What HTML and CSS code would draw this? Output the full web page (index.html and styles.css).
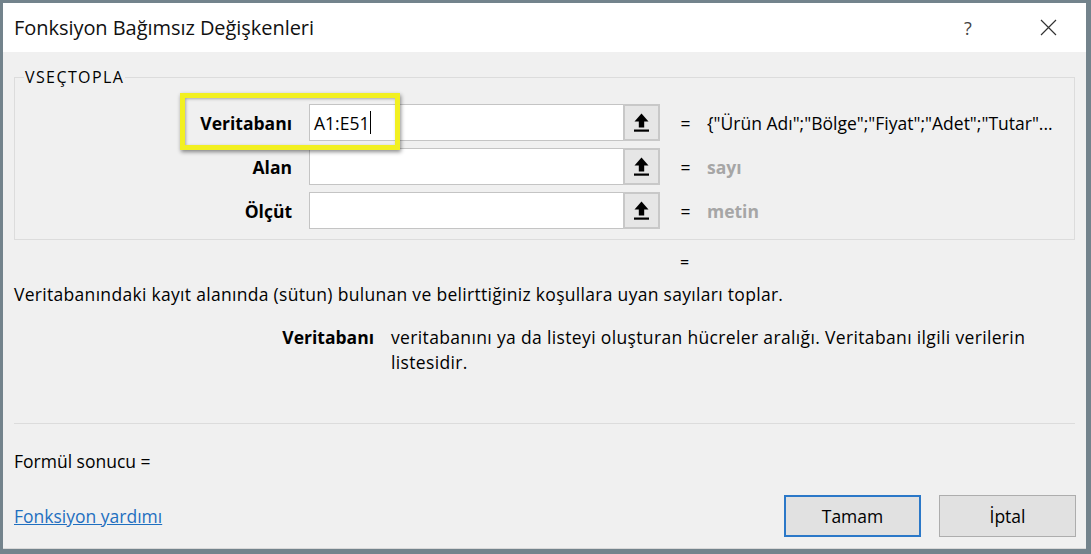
FILE: index.html
```html
<!DOCTYPE html>
<html lang="tr">
<head>
<meta charset="utf-8">
<title>Fonksiyon Bağımsız Değişkenleri</title>
<link rel="stylesheet" href="styles.css">
</head>
<body>
<div class="window">
  <div class="dialog">
    <div class="titlebar">
      <div class="title">Fonksiyon Bağımsız Değişkenleri</div>
      <div class="tb-help">?</div>
      <div class="tb-close">
        <svg width="17" height="17" viewBox="0 0 17 17"><path d="M1 1 L16 16 M16 1 L1 16" stroke="#333" stroke-width="1.2" fill="none"/></svg>
      </div>
    </div>
    <div class="body">
      <fieldset class="group">
        <legend class="legend">VSEÇTOPLA</legend>
        <div class="args">
          <div class="arg-label">Veritabanı</div>
          <div class="arg-input"><span class="typed">A1:E51</span><span class="caret"></span></div>
          <div class="arg-btn"><svg width="15" height="19" viewBox="0 0 15 19"><path d="M7.5 0.5 L14.5 8.5 L10.2 8.5 L10.2 14.5 L4.8 14.5 L4.8 8.5 L0.5 8.5 Z" fill="#000"/><rect x="0" y="16.5" width="15" height="2.2" fill="#000"/></svg></div>
          <div class="arg-eq">=</div>
          <div class="arg-val">{"Ürün Adı";"Bölge";"Fiyat";"Adet";"Tutar"...</div>

          <div class="arg-label">Alan</div>
          <div class="arg-input"></div>
          <div class="arg-btn"><svg width="15" height="19" viewBox="0 0 15 19"><path d="M7.5 0.5 L14.5 8.5 L10.2 8.5 L10.2 14.5 L4.8 14.5 L4.8 8.5 L0.5 8.5 Z" fill="#000"/><rect x="0" y="16.5" width="15" height="2.2" fill="#000"/></svg></div>
          <div class="arg-eq">=</div>
          <div class="arg-val muted">sayı</div>

          <div class="arg-label">Ölçüt</div>
          <div class="arg-input"></div>
          <div class="arg-btn"><svg width="15" height="19" viewBox="0 0 15 19"><path d="M7.5 0.5 L14.5 8.5 L10.2 8.5 L10.2 14.5 L4.8 14.5 L4.8 8.5 L0.5 8.5 Z" fill="#000"/><rect x="0" y="16.5" width="15" height="2.2" fill="#000"/></svg></div>
          <div class="arg-eq">=</div>
          <div class="arg-val muted">metin</div>
        </div>
        <div class="highlight"></div>
      </fieldset>
      <div class="result-eq">=</div>
      <p class="desc">Veritabanındaki kayıt alanında (sütun) bulunan ve belirttiğiniz koşullara uyan sayıları toplar.</p>
      <div class="argdesc">
        <div class="argdesc-name">Veritabanı</div>
        <div class="argdesc-text">veritabanını ya da listeyi oluşturan hücreler aralığı. Veritabanı ilgili verilerin listesidir.</div>
      </div>
      <div class="sep"></div>
      <div class="formula">Formül sonucu =</div>
      <div class="footer">
        <a class="help-link" href="#">Fonksiyon yardımı</a>
        <div class="buttons">
          <button class="btn btn-default">Tamam</button>
          <button class="btn">İptal</button>
        </div>
      </div>
    </div>
  </div>
</div>
</body>
</html>
```
FILE: styles.css
```css
* { box-sizing: border-box; }
html, body { margin: 0; padding: 0; }
body {
  font-family: "Open Sans", "Noto Sans", sans-serif;
  color: #000;
}
.window {
  width: 1091px;
  height: 554px;
  background: #73838c;
  padding: 3px 5px 5px 3px;
}
.dialog {
  width: 100%;
  height: 100%;
  background: #f0f0f0;
  display: flex;
  flex-direction: column;
  border-bottom: 1px solid #d8d8d8;
}
.titlebar {
  height: 49px;
  background: #fff;
  display: flex;
  align-items: center;
  padding-left: 11px;
  flex: none;
}
.title {
  font-size: 20px;
  flex: 1;
  color: #111;
  letter-spacing: -0.05px;
}
.tb-help {
  font-size: 18px;
  color: #444;
  width: 40px;
  text-align: center;
  margin-right: 37px;
}
.tb-close {
  width: 46px;
  display: flex;
  justify-content: center;
  margin-right: 15px;
}
.body {
  flex: 1;
  padding: 0 11px 0 11px;
  display: flex;
  flex-direction: column;
  position: relative;
}
.group {
  margin: 14px 0 0 0;
  padding: 16px 0 10px 0;
  border: 1px solid #dcdcdc;
  position: relative;
  min-width: 0;
}
.legend {
  font-size: 16px;
  letter-spacing: 1.4px;
  padding: 0 1px;
  margin-left: 9px;
  color: #000;
}
.args {
  display: grid;
  grid-template-columns: 294px 314px 37px 47px 1fr;
  grid-auto-rows: 37px;
  row-gap: 7px;
  align-items: center;
}
.arg-label {
  font-weight: bold;
  font-size: 17.5px;
  text-align: right;
  padding-right: 17px;
}
.arg-input {
  height: 37px;
  background: #fff;
  border: 1px solid #c4c4c4;
  border-right: none;
  display: flex;
  align-items: center;
  padding-left: 4px;
  font-size: 17.5px;
}
.caret {
  display: inline-block;
  width: 1px;
  height: 23px;
  background: #000;
  margin-left: 1px;
}
.arg-btn {
  height: 37px;
  background: #e6e6e6;
  border: 2px solid #c8c8c8;
  display: flex;
  align-items: center;
  justify-content: center;
}
.arg-eq {
  font-size: 17.5px;
  text-align: center;
  padding-left: 4px;
}
.arg-val {
  font-size: 17.5px;
  white-space: nowrap;
}
.muted {
  color: #a6a6a6;
  font-weight: bold;
}
.highlight {
  position: absolute;
  left: 165px;
  top: 5px;
  width: 220px;
  height: 57px;
  border: 5px solid #f2f021;
  box-shadow: 1px 2px 4px rgba(0,0,0,0.45), inset 1px 1px 3px rgba(0,0,0,0.3);
  pointer-events: none;
}
.result-eq {
  margin-left: 666px;
  margin-top: 11px;
  font-size: 16px;
  height: 22px;
  line-height: 22px;
}
.desc {
  margin: 8px 0 0 0;
  font-size: 17.5px;
  line-height: 26px;
  letter-spacing: 0.3px;
}
.argdesc {
  display: flex;
  margin-top: 18px;
  font-size: 17.5px;
  line-height: 25px;
}
.argdesc-name {
  font-weight: bold;
  width: 377px;
  text-align: right;
  padding-right: 17px;
  flex: none;
}
.argdesc-text {
  width: 660px;
  letter-spacing: 0.35px;
}
.sep {
  margin-top: 48px;
  height: 1px;
  background: #dcdcdc;
}
.formula {
  margin-top: 24px;
  font-size: 17.5px;
  line-height: 26px;
}
.footer {
  display: flex;
  align-items: center;
  justify-content: space-between;
  margin-top: 21px;
}
.help-link {
  color: #1f6fc0;
  font-size: 17.5px;
  text-decoration: underline;
}
.buttons {
  display: flex;
  gap: 18px;
  margin-right: -1px;
}
.btn {
  width: 137px;
  height: 42px;
  background: #e1e1e1;
  border: 1px solid #adadad;
  font-family: "Open Sans", "Noto Sans", sans-serif;
  font-size: 17.5px;
  color: #000;
  padding: 0;
}
.btn-default {
  border: 2px solid #2b78c8;
}
```
